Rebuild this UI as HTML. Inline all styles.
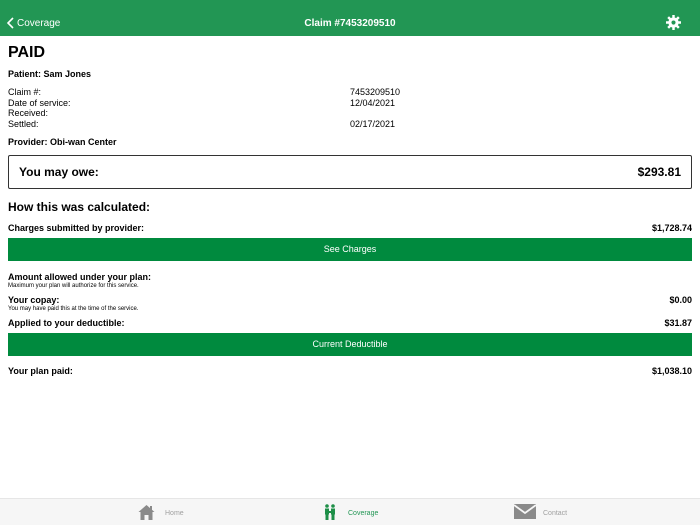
<!DOCTYPE html>
<html><head><style>
*{margin:0;padding:0;box-sizing:border-box}
body{width:700px;height:525px;background:#fff;font-family:"Liberation Sans",Arial,sans-serif;color:#000;position:relative;overflow:hidden}
.hdr{height:36px;background:#229654;color:#fff;position:relative;font-size:10px}
.hdr .back{position:absolute}
.hdr .t{position:absolute;left:0;right:0;text-align:center;font-weight:bold}
.a{position:absolute;font-size:9px}
.b{font-weight:bold}
.row{position:absolute;left:8px;right:8px;font-size:9px;font-weight:bold}
.row .r{float:right}
.btn{position:absolute;left:8px;right:8px;height:23px;background:#008a3e;color:#fff;font-size:9px;text-align:center;line-height:23px}
.small{font-size:6px;font-weight:normal;display:block;margin-top:1px}
.tab{position:absolute;left:0;right:0;top:498px;height:27px;background:#f6f6f6;border-top:1px solid #e6e6e6}
.tab .l{position:absolute;top:11px;font-size:7px;color:#a0a0a0}
</style></head><body>
<div class="hdr">
<svg style="position:absolute;left:7px;top:17px" width="7" height="12" viewBox="0 0 7 12"><path d="M6 1L1 6l5 5" stroke="#fff" stroke-width="1.6" fill="none"/></svg>
<span class="back" style="left:17px;top:18px">Coverage</span>
<div class="t" style="top:18px">Claim #7453209510</div>
<svg style="position:absolute;left:666px;top:15px" width="15" height="15" viewBox="0 0 16 16"><g fill="#fff"><circle cx="8" cy="8" r="5.5"/><g stroke="#fff" stroke-width="2.6"><path d="M8 0v16M0 8h16M2.3 2.3l11.4 11.4M13.7 2.3L2.3 13.7"/></g></g><circle cx="8" cy="8" r="2.2" fill="#229654"/></svg>
</div>
<div class="a b" style="left:8px;top:44px;font-size:16px">PAID</div>
<div class="a b" style="left:8px;top:69px">Patient: Sam Jones</div>
<div class="a" style="left:8px;top:87px;line-height:10.7px">Claim #:<br>Date of service:<br>Received:<br>Settled:</div>
<div class="a" style="left:350px;top:87px;line-height:10.7px">7453209510<br>12/04/2021<br><br>02/17/2021</div>
<div class="a b" style="left:8px;top:137px">Provider: Obi-wan Center</div>
<div style="position:absolute;left:8px;right:8px;top:155px;height:34px;border:1px solid #333;border-radius:2px;font-size:12px;font-weight:bold;padding:9px 10px 0">You may owe:<span style="float:right">$293.81</span></div>
<div class="a b" style="left:8px;top:200px;font-size:12px">How this was calculated:</div>
<div class="row" style="top:223px">Charges submitted by provider:<span class="r">$1,728.74</span></div>
<div class="btn" style="top:238px">See Charges</div>
<div class="row" style="top:272px">Amount allowed under your plan:<span class="small">Maximum your plan will authorize for this service.</span></div>
<div class="row" style="top:295px"><span class="r">$0.00</span>Your copay:<span class="small">You may have paid this at the time of the service.</span></div>
<div class="row" style="top:318px">Applied to your deductible:<span class="r">$31.87</span></div>
<div class="btn" style="top:333px">Current Deductible</div>
<div class="row" style="top:366px">Your plan paid:<span class="r">$1,038.10</span></div>
<div class="tab">
<svg style="position:absolute;left:138px;top:5px" width="17" height="16" viewBox="0 0 17 16"><path d="M8.5 1L0.5 8h2v8h4v-5h4v5h4V8h2z" fill="#8a8a8a"/><rect x="12" y="2" width="2" height="4" fill="#8a8a8a"/></svg>
<span class="l" style="left:165px">Home</span>
<svg style="position:absolute;left:324px;top:5px" width="12" height="17" viewBox="0 0 12 17"><g fill="#1e8f48"><circle cx="3" cy="2" r="1.8"/><circle cx="9" cy="2" r="1.8"/><rect x="1" y="4.5" width="4" height="6"/><rect x="7" y="4.5" width="4" height="6"/><rect x="1.5" y="10" width="3" height="6"/><rect x="7.5" y="10" width="3" height="6"/><rect x="4" y="7" width="4" height="2"/></g></svg>
<span class="l" style="left:348px;color:#229654">Coverage</span>
<svg style="position:absolute;left:514px;top:5px" width="22" height="15" viewBox="0 0 22 15"><rect width="22" height="15" fill="#8a8a8a"/><path d="M0 1l11 8 11-8" stroke="#f6f6f6" stroke-width="1.8" fill="none"/></svg>
<span class="l" style="left:543px">Contact</span>
</div>
</body></html>
